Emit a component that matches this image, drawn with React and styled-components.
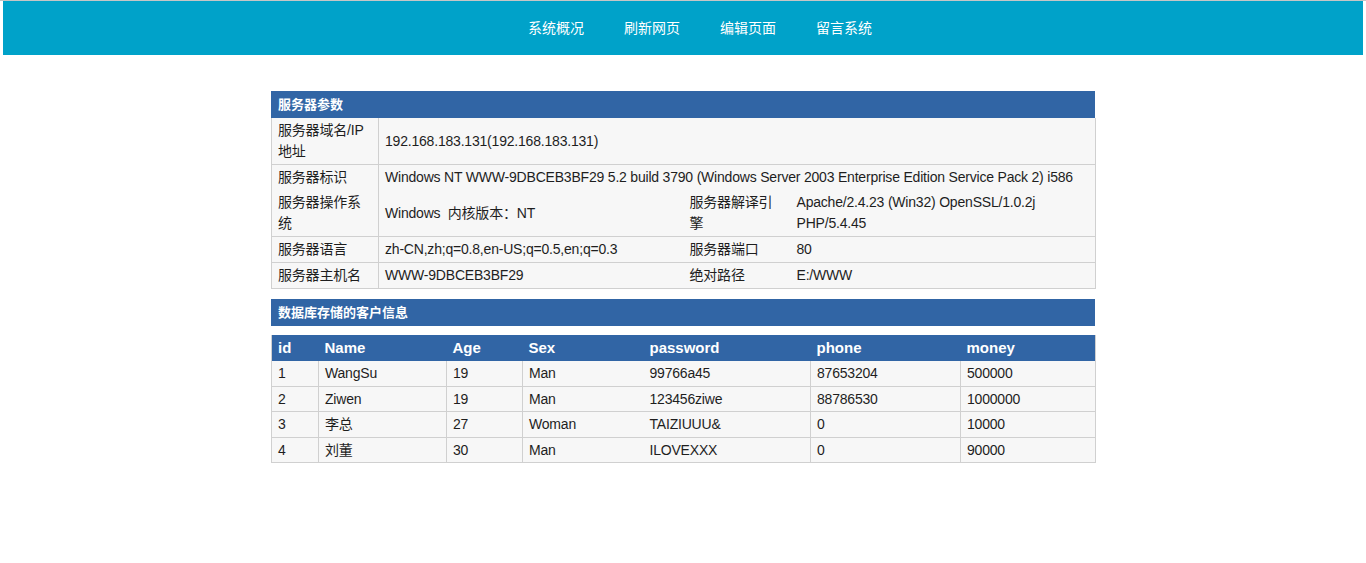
import styled, { createGlobalStyle } from 'styled-components'

const GlobalStyle = createGlobalStyle`
  html, body {
    margin: 0;
    padding: 0;
    background: #fff;
  }
  body {
    border-top: 1px solid #c6c6c6;
    font-family: "Liberation Sans", "Noto Sans CJK SC", sans-serif;
    font-size: 14px;
    color: #1e1e1e;
  }
`

const Page = styled.div`
  padding: 0 3px;
`

const TopBar = styled.header`
  height: 54px;
  background: #00a2c9;
  display: flex;
  align-items: center;
  justify-content: center;
  padding-left: 34px;
`

const NavItem = styled.a`
  color: #fff;
  font-size: 14px;
  text-decoration: none;
  margin: 0 20px;
  line-height: 20px;
`

const Main = styled.main`
  width: 824px;
  margin: 36px auto 0;
`

const TitleBar = styled.div`
  background: #3165a5;
  color: #fff;
  font-weight: bold;
  font-size: 13px;
  height: 27px;
  line-height: 27px;
  padding-left: 7px;
  margin-bottom: ${(p) => p.gap || 0}px;
`

const Table = styled.table`
  width: 100%;
  border-collapse: collapse;
  table-layout: fixed;
  border: 1px solid #d0d0d0;
  border-top: none;
  margin-bottom: 10px;
`

const Row = styled.tr`
  border-bottom: ${(p) => (p.open ? 'none' : '1px solid #d0d0d0')};
`

const Cell = styled.td`
  background: #f7f7f7;
  padding: 2px 6px;
  line-height: ${(p) => (p.compact ? 20.6 : 21)}px;
  letter-spacing: -0.2px;
  vertical-align: middle;
  border-right: ${(p) => (p.line ? '1px solid #d0d0d0' : 'none')};
`

const Head = styled.th`
  background: #3165a5;
  color: #fff;
  font-weight: bold;
  font-size: 15px;
  text-align: left;
  padding: 2px 6px;
  line-height: 22px;
`

const navItems = ['系统概况', '刷新网页', '编辑页面', '留言系统']

const columns = [
  { key: 'id', width: 47, line: true },
  { key: 'Name', width: 128, line: true },
  { key: 'Age', width: 76, line: true },
  { key: 'Sex', width: 121, line: false },
  { key: 'password', width: 167, line: true },
  { key: 'phone', width: 150, line: true },
  { key: 'money', width: 135, line: false },
]

const customers = [
  ['1', 'WangSu', '19', 'Man', '99766a45', '87653204', '500000'],
  ['2', 'Ziwen', '19', 'Man', '123456ziwe', '88786530', '1000000'],
  ['3', '李总', '27', 'Woman', 'TAIZIUUU&', '0', '10000'],
  ['4', '刘董', '30', 'Man', 'ILOVEXXX', '0', '90000'],
]

export default function App() {
  return (
    <Page>
      <GlobalStyle />
      <TopBar>
        {navItems.map((item) => (
          <NavItem key={item} href="#">{item}</NavItem>
        ))}
      </TopBar>

      <Main>
        <TitleBar>服务器参数</TitleBar>
        <Table>
          <colgroup>
            <col style={{ width: 107 }} />
            <col style={{ width: 305 }} />
            <col style={{ width: 107 }} />
            <col style={{ width: 305 }} />
          </colgroup>
          <tbody>
            <Row>
              <Cell line>服务器域名/IP地址</Cell>
              <Cell colSpan={3}>192.168.183.131(192.168.183.131)</Cell>
            </Row>
            <Row open>
              <Cell line>服务器标识</Cell>
              <Cell colSpan={3}>
                Windows NT WWW-9DBCEB3BF29 5.2 build 3790 (Windows Server 2003 Enterprise Edition Service Pack 2) i586
              </Cell>
            </Row>
            <Row>
              <Cell line>服务器操作系统</Cell>
              <Cell>Windows&nbsp; 内核版本：NT</Cell>
              <Cell>服务器解译引擎</Cell>
              <Cell>Apache/2.4.23 (Win32) OpenSSL/1.0.2j PHP/5.4.45</Cell>
            </Row>
            <Row>
              <Cell line>服务器语言</Cell>
              <Cell>zh-CN,zh;q=0.8,en-US;q=0.5,en;q=0.3</Cell>
              <Cell>服务器端口</Cell>
              <Cell>80</Cell>
            </Row>
            <Row>
              <Cell line>服务器主机名</Cell>
              <Cell>WWW-9DBCEB3BF29</Cell>
              <Cell>绝对路径</Cell>
              <Cell>E:/WWW</Cell>
            </Row>
          </tbody>
        </Table>

        <TitleBar gap={9}>数据库存储的客户信息</TitleBar>
        <Table>
          <colgroup>
            {columns.map((c) => (
              <col key={c.key} style={{ width: c.width }} />
            ))}
          </colgroup>
          <thead>
            <tr>
              {columns.map((c) => (
                <Head key={c.key}>{c.key}</Head>
              ))}
            </tr>
          </thead>
          <tbody>
            {customers.map((row) => (
              <Row key={row[0]}>
                {row.map((v, i) => (
                  <Cell key={i} compact line={columns[i].line}>{v}</Cell>
                ))}
              </Row>
            ))}
          </tbody>
        </Table>
      </Main>
    </Page>
  )
}
